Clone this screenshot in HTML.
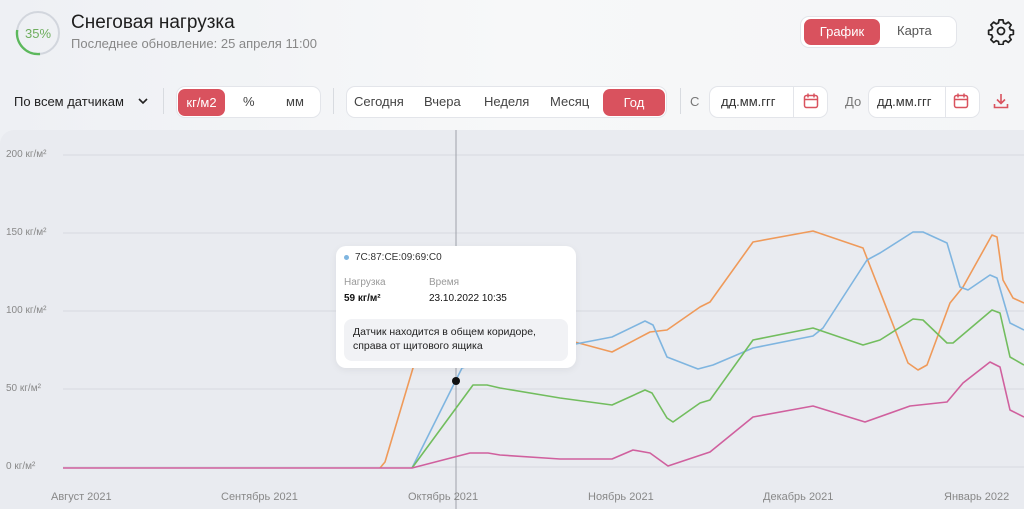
<!DOCTYPE html>
<html><head><meta charset="utf-8"><style>
*{margin:0;padding:0;box-sizing:border-box}
body{width:1024px;height:509px;overflow:hidden;background:linear-gradient(90deg,#eef0f4 0%,#f7f8f9 50%,#f4f5f7 100%);font-family:"Liberation Sans","DejaVu Sans",sans-serif;position:relative;color:#222}
.abs{position:absolute}
.grp{position:absolute;background:#fff;border:1px solid #e3e5ea;border-radius:9px;height:32px}
.act{position:absolute;background:#d9525e;color:#fff;border-radius:7px;text-align:center;font-size:13px;line-height:27px;top:2px;height:27px}
.t{position:absolute;font-size:13px;color:#444;top:8px}
.chart{position:absolute;left:0;top:130px;width:1024px;height:379px;background:#e9ebf0;border-top-left-radius:14px}
.yl{position:absolute;left:6px;font-size:10px;color:#888}
.xl{position:absolute;top:491px;font-size:11px;color:#888}
</style></head><body>
<svg class="abs" style="left:14px;top:10px" width="48" height="48" viewBox="0 0 48 48">
<circle cx="24" cy="23" r="21" fill="none" stroke="#d2d6dd" stroke-width="2"/>
<path d="M26 44 A21 21 0 0 1 3.2 20" fill="none" stroke="#5cb85c" stroke-width="2.4"/>
<text x="24" y="28" text-anchor="middle" font-size="13" fill="#6fae5e" font-family="Liberation Sans">35%</text>
</svg>
<div class="abs" style="left:71px;top:12px;font-size:19px;color:#1e1e1e">Снеговая нагрузка</div>
<div class="abs" style="left:71px;top:36px;font-size:13px;color:#888">Последнее обновление: 25 апреля 11:00</div>
<div class="grp" style="left:800px;top:16px;width:157px;height:32px"></div>
<div class="act" style="left:804px;top:19px;width:76px;height:26px;line-height:26px">График</div>
<div class="abs" style="left:897px;top:23px;font-size:13px;color:#555">Карта</div>
<svg class="abs" style="left:987px;top:17px" width="28" height="28" viewBox="0 0 24 24" fill="none" stroke="#222" stroke-width="1.5"><circle cx="12" cy="12" r="3"/><path d="M10.3 2.5h3.4l.5 2.6 1.9.8 2.2-1.5 2.4 2.4-1.5 2.2.8 1.9 2.6.5v3.4l-2.6.5-.8 1.9 1.5 2.2-2.4 2.4-2.2-1.5-1.9.8-.5 2.6h-3.4l-.5-2.6-1.9-.8-2.2 1.5-2.4-2.4 1.5-2.2-.8-1.9-2.6-.5v-3.4l2.6-.5.8-1.9-1.5-2.2 2.4-2.4 2.2 1.5 1.9-.8z" stroke-linejoin="round"/></svg>

<div class="abs" style="left:14px;top:94px;font-size:13px;color:#222">По всем датчикам</div>
<svg class="abs" style="left:137px;top:96px" width="12" height="10"><path d="M2 3l4 4 4-4" fill="none" stroke="#222" stroke-width="1.6"/></svg>
<div class="abs" style="left:163px;top:88px;width:1px;height:26px;background:#d8dbe0"></div>
<div class="grp" style="left:176px;top:86px;width:145px"></div>
<div class="act" style="left:178px;top:89px;width:47px">кг/м2</div>
<div class="t" style="left:243px;top:94px">%</div>
<div class="t" style="left:286px;top:94px">мм</div>
<div class="abs" style="left:333px;top:88px;width:1px;height:26px;background:#d8dbe0"></div>
<div class="grp" style="left:346px;top:86px;width:321px"></div>
<div class="t" style="left:354px;top:94px">Сегодня</div>
<div class="t" style="left:424px;top:94px">Вчера</div>
<div class="t" style="left:484px;top:94px">Неделя</div>
<div class="t" style="left:550px;top:94px">Месяц</div>
<div class="act" style="left:603px;top:89px;width:62px">Год</div>
<div class="abs" style="left:680px;top:88px;width:1px;height:26px;background:#d8dbe0"></div>
<div class="t" style="left:690px;top:94px;color:#777">С</div>
<div class="grp" style="left:709px;top:86px;width:119px"></div>
<div class="abs" style="left:793px;top:87px;width:1px;height:30px;background:#e3e5ea"></div>
<div class="t" style="left:721px;top:94px;color:#333">дд.мм.ггг</div>
<div class="t" style="left:845px;top:94px;color:#777">До</div>
<div class="grp" style="left:868px;top:86px;width:112px"></div>
<div class="abs" style="left:945px;top:87px;width:1px;height:30px;background:#e3e5ea"></div>
<div class="t" style="left:877px;top:94px;color:#333">дд.мм.ггг</div>
<svg class="abs" style="left:802px;top:92px" width="18" height="18" viewBox="0 0 18 18" fill="none" stroke="#d9525e" stroke-width="1.5"><rect x="2.5" y="3.5" width="13" height="12" rx="2"/><path d="M2.5 7.5h13M6 1.5v4M12 1.5v4"/></svg>
<svg class="abs" style="left:952px;top:92px" width="18" height="18" viewBox="0 0 18 18" fill="none" stroke="#d9525e" stroke-width="1.5"><rect x="2.5" y="3.5" width="13" height="12" rx="2"/><path d="M2.5 7.5h13M6 1.5v4M12 1.5v4"/></svg>
<svg class="abs" style="left:992px;top:92px" width="18" height="18" viewBox="0 0 18 18" fill="none" stroke="#d9525e" stroke-width="1.6"><path d="M9 2v9M5 7.5l4 4 4-4M2.5 12v3.5h13V12"/></svg>

<div class="chart"></div>
<svg class="abs" style="left:0;top:0" width="1024" height="509">
<g stroke="#d7dae0" stroke-width="1"><line x1="63" y1="155" x2="1024" y2="155"/><line x1="63" y1="233" x2="1024" y2="233"/><line x1="63" y1="311" x2="1024" y2="311"/><line x1="63" y1="389" x2="1024" y2="389"/><line x1="63" y1="467" x2="1024" y2="467"/></g>
<line x1="456" y1="130" x2="456" y2="509" stroke="#9ea2aa" stroke-width="1"/>
<g fill="none" stroke-width="1.6" stroke-linejoin="round">
<path stroke="#ef9a5a" d="M380 468 L385 462 L413 368 L440 340 L560 338 L612 352 L650 332 L667 330 L700 307 L710 302 L753 242 L813 231 L863 248 L908 363 L918 370 L927 365 L950 303 L963 287 L992 235 L997 237 L1003 280 L1013 298 L1024 303"/>
<path stroke="#7fb5e0" d="M412 468 L462 368 L520 352 L560 347 L612 337 L645 321 L653 325 L667 357 L698 369 L713 365 L753 348 L813 336 L823 328 L867 260 L880 253 L913 232 L923 232 L947 243 L960 287 L968 290 L990 275 L997 278 L1010 323 L1024 330"/>
<path stroke="#72bd5e" d="M412 468 L473 385 L487 385 L500 388 L560 398 L612 405 L645 390 L652 393 L667 418 L673 422 L700 403 L710 400 L753 340 L813 328 L863 345 L880 340 L913 319 L923 320 L947 343 L953 343 L992 310 L1000 313 L1010 357 L1024 365"/>
<path stroke="#d0609e" d="M63 468 L412 468 L470 453 L488 453 L500 455 L560 459 L612 459 L633 450 L650 453 L668 466 L710 452 L753 417 L813 406 L865 422 L910 406 L947 402 L963 383 L990 362 L1000 367 L1010 410 L1024 417"/>
</g>
<circle cx="456" cy="381" r="4" fill="#111"/>
</svg>
<div class="yl" style="top:149px">200 кг/м²</div>
<div class="yl" style="top:227px">150 кг/м²</div>
<div class="yl" style="top:305px">100 кг/м²</div>
<div class="yl" style="top:383px">50 кг/м²</div>
<div class="yl" style="top:461px">0 кг/м²</div>
<div class="xl" style="left:51px">Август 2021</div>
<div class="xl" style="left:221px">Сентябрь 2021</div>
<div class="xl" style="left:408px">Октябрь 2021</div>
<div class="xl" style="left:588px">Ноябрь 2021</div>
<div class="xl" style="left:763px">Декабрь 2021</div>
<div class="xl" style="left:944px">Январь 2022</div>

<div class="abs" style="left:336px;top:246px;width:240px;height:122px;background:#fff;border-radius:10px;box-shadow:0 2px 8px rgba(0,0,0,.06)">
<div class="abs" style="left:8px;top:9px;width:5px;height:5px;border-radius:50%;background:#7fb5e0"></div>
<div class="abs" style="left:19px;top:6px;font-size:10px;color:#333">7C:87:CE:09:69:C0</div>
<div class="abs" style="left:8px;top:31px;font-size:10px;color:#999">Нагрузка</div>
<div class="abs" style="left:93px;top:31px;font-size:10px;color:#999">Время</div>
<div class="abs" style="left:8px;top:47px;font-size:10px;color:#111;font-weight:bold">59 кг/м²</div>
<div class="abs" style="left:93px;top:47px;font-size:10px;color:#111">23.10.2022 10:35</div>
<div class="abs" style="left:8px;top:73px;width:224px;height:42px;background:#f1f2f5;border-radius:8px;font-size:10.5px;color:#222;padding:6px 9px;line-height:14px">Датчик находится в общем коридоре, справа от щитового ящика</div>
</div>
</body></html>
